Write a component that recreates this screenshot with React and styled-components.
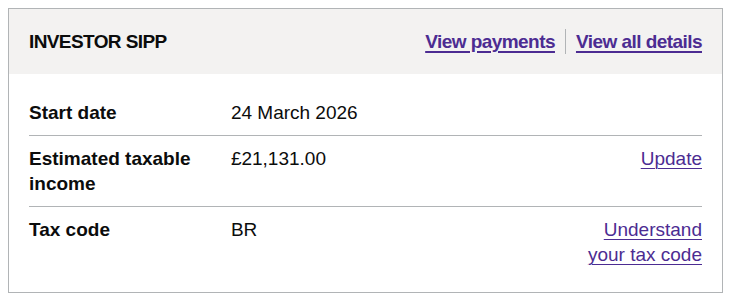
import styled, { createGlobalStyle } from "styled-components";

const GlobalStyle = createGlobalStyle`
  body {
    margin: 8px;
    font-family: "Liberation Sans", Arial, sans-serif;
    color: #0b0c0c;
    background: #ffffff;
  }
`;

const Card = styled.div`
  border: 1px solid #b1b4b6;
`;

const CardHeader = styled.div`
  display: flex;
  align-items: center;
  justify-content: space-between;
  padding: 20px 20px;
  background: #f3f2f1;
`;

const Title = styled.h2`
  margin: 0;
  font-size: 19px;
  line-height: 25px;
  font-weight: 700;
  letter-spacing: -0.6px;
`;

const HeaderActions = styled.ul`
  display: flex;
  margin: 0;
  padding: 0;
  list-style: none;
`;

const HeaderAction = styled.li`
  font-size: 19px;
  line-height: 25px;
  font-weight: 700;
  letter-spacing: -0.55px;
  padding: 0 10px;
  border-left: 1px solid #b1b4b6;

  &:first-child {
    border-left: none;
    padding-left: 0;
  }
  &:last-child {
    padding-right: 0;
  }
`;

const Link = styled.a`
  color: #4c2c92;
  text-decoration: underline;
  text-decoration-thickness: ${(p) => (p.$bold ? "2px" : "1px")};
  text-underline-offset: 0.16em;
`;

const CardContent = styled.div`
  padding: 16px 20px 15px;
`;

const List = styled.dl`
  margin: 0;
`;

const Row = styled.div`
  display: grid;
  grid-template-columns: 30% 50% 20%;
  border-bottom: 1px solid #b1b4b6;

  &:last-child {
    border-bottom: none;
  }
`;

const Key = styled.dt`
  padding: 10px 20px 10px 0;
  font-size: 19px;
  line-height: 25px;
  font-weight: 700;
`;

const Value = styled.dd`
  margin: 0;
  padding: 10px 20px 10px 0;
  font-size: 19px;
  line-height: 25px;
`;

const Actions = styled.dd`
  margin: 0;
  padding: 10px 0;
  font-size: 19px;
  line-height: 25px;
  text-align: right;
`;

const rows = [
  { key: "Start date", value: "24 March 2026" },
  { key: "Estimated taxable income", value: "£21,131.00", action: "Update" },
  { key: "Tax code", value: "BR", action: "Understand your tax code" },
];

export default function App() {
  return (
    <>
      <GlobalStyle />
      <Card>
        <CardHeader>
          <Title>INVESTOR SIPP</Title>
          <HeaderActions>
            <HeaderAction>
              <Link href="#" $bold>View payments</Link>
            </HeaderAction>
            <HeaderAction>
              <Link href="#" $bold>View all details</Link>
            </HeaderAction>
          </HeaderActions>
        </CardHeader>
        <CardContent>
          <List>
            {rows.map((r) => (
              <Row key={r.key}>
                <Key>{r.key}</Key>
                <Value>{r.value}</Value>
                <Actions>{r.action && <Link href="#">{r.action}</Link>}</Actions>
              </Row>
            ))}
          </List>
        </CardContent>
      </Card>
    </>
  );
}
